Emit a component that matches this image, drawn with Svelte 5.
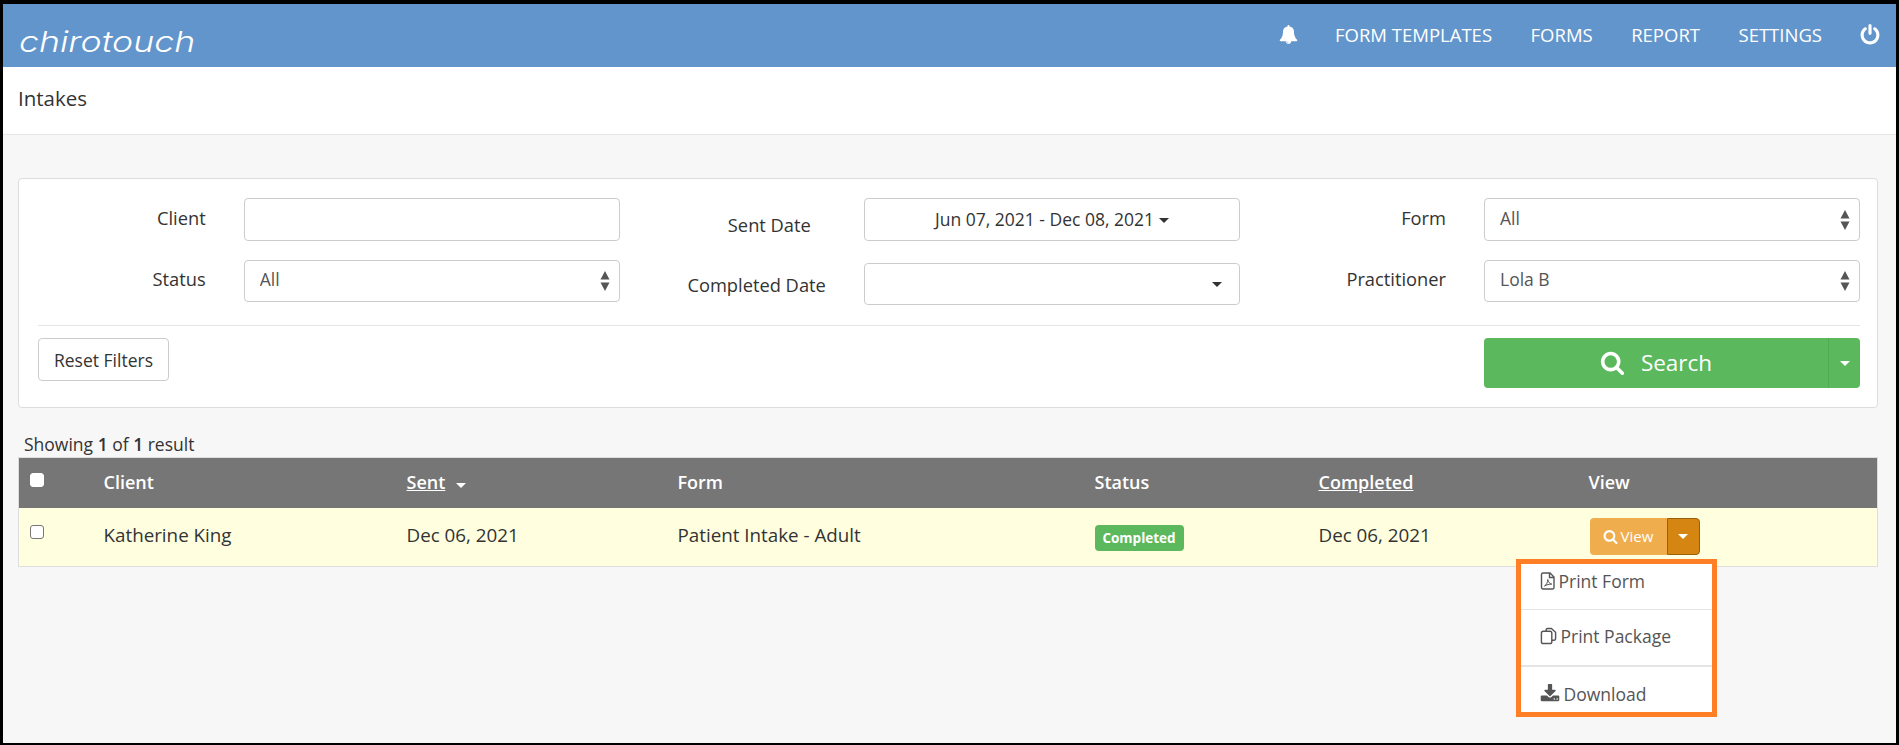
<script>
  let completedFilter = '';
  const searchPath = 'M1216 832q0-185-131.5-316.5t-316.5-131.5-316.5 131.5-131.5 316.5 131.5 316.5 316.5 131.5 316.5-131.5 131.5-316.5zm512 832q0 52-38 90t-90 38q-54 0-90-38l-343-342q-179 124-399 124-143 0-273.5-55.5t-225-150-150-225-55.5-273.5 55.5-273.5 150-225 225-150 273.5-55.5 273.5 55.5 225 150 150 225 55.5 273.5q0 220-124 399l343 343q37 37 37 90z';
  const navItems = ['FORM TEMPLATES', 'FORMS', 'REPORT', 'SETTINGS'];
</script>

<div class="page">
  <header class="topbar">
    <span class="logo">chirotouch</span>
    <nav class="nav">
      <svg class="bell" viewBox="0 0 1792 1792" fill="currentColor"><path d="M912 1696q0-16-16-16-59 0-101.5-42.5t-42.5-101.5q0-16-16-16t-16 16q0 73 51.5 124.5t124.5 51.5q16 0 16-16zm816-288q0 52-38 90t-90 38h-448q0 106-75 181t-181 75-181-75-75-181h-448q-52 0-90-38t-38-90q50-42 91-88t85-119.5 74.5-158.5 50-206 19.5-260q0-152 117-282.5t307-158.5q-8-19-8-39 0-40 28-68t68-28 68 28 28 68q0 20-8 39 190 28 307 158.5t117 282.5q0 139 19.5 260t50 206 74.5 158.5 85 119.5 91 88z"/></svg>
      {#each navItems as item}
        <span class="nav-link">{item}</span>
      {/each}
      <svg class="power" viewBox="0 0 1792 1792" fill="currentColor"><path d="M1664 896q0 156-61 298t-164 245-245 164-298 61-298-61-245-164-164-245-61-298q0-182 80.5-343t226.5-270q43-32 95.5-25t83.5 50q32 42 24.5 94.5t-49.5 84.5q-98 74-151.5 181t-53.5 228q0 104 40.5 198.5t109.5 163.5 163.5 109.5 198.5 40.5 198.5-40.5 163.5-109.5 109.5-163.5 40.5-198.5q0-121-53.5-228t-151.5-181q-42-32-49.5-84.5t24.5-94.5q31-43 84-50t95 25q146 109 226.5 270t80.5 343zm-640-768v640q0 52-38 90t-90 38-90-38-38-90v-640q0-52 38-90t90-38 90 38 38 90z"/></svg>
    </nav>
  </header>

  <div class="subhead">Intakes</div>

  <main class="content">
    <section class="filters">
      <div class="filter-grid">
        <div class="col">
          <div class="field">
            <label for="f-client" class="up">Client</label>
            <input id="f-client" class="control" type="text" />
          </div>
          <div class="field short">
            <label for="f-status" class="up">Status</label>
            <div class="select-wrap">
              <select id="f-status" class="control"><option>All</option></select>
              <svg class="updown" viewBox="0 0 10 22"><path d="M5 1 9.5 9.5H.5zM.5 12.5h9L5 21z"/></svg>
            </div>
          </div>
        </div>

        <div class="col wide-gap">
          <div class="field">
            <span class="label sent">Sent Date</span>
            <button type="button" class="control range">Jun 07, 2021 - Dec 08, 2021 <i class="caret"></i></button>
          </div>
          <div class="field short">
            <span class="label">Completed Date</span>
            <button type="button" class="control range end">{completedFilter}<i class="caret"></i></button>
          </div>
        </div>

        <div class="col">
          <div class="field">
            <label for="f-form" class="up">Form</label>
            <div class="select-wrap">
              <select id="f-form" class="control"><option>All</option></select>
              <svg class="updown" viewBox="0 0 10 22"><path d="M5 1 9.5 9.5H.5zM.5 12.5h9L5 21z"/></svg>
            </div>
          </div>
          <div class="field short">
            <label for="f-prac" class="up">Practitioner</label>
            <div class="select-wrap">
              <select id="f-prac" class="control"><option>Lola B</option></select>
              <svg class="updown" viewBox="0 0 10 22"><path d="M5 1 9.5 9.5H.5zM.5 12.5h9L5 21z"/></svg>
            </div>
          </div>
        </div>
      </div>

      <hr class="rule" />

      <div class="actions">
        <button type="button" class="reset">Reset Filters</button>
        <div class="search-group">
          <button type="button" class="search">
            <svg viewBox="0 0 1792 1792" fill="currentColor"><path d={searchPath} /></svg>
            <span>Search</span>
          </button>
          <button type="button" class="search-toggle" aria-label="More"><i class="caret"></i></button>
        </div>
      </div>
    </section>

    <div class="count">Showing <b>1</b> of <b>1</b> result</div>

    <table class="results">
      <colgroup>
        <col style="width:85px" /><col style="width:303px" /><col style="width:271px" />
        <col style="width:417px" /><col style="width:224px" /><col style="width:270px" /><col />
      </colgroup>
      <thead>
        <tr>
          <th><input type="checkbox" class="check" /></th>
          <th>Client</th>
          <th><u>Sent</u> <i class="caret head-caret"></i></th>
          <th>Form</th>
          <th>Status</th>
          <th><u>Completed</u></th>
          <th>View</th>
          <th></th>
        </tr>
      </thead>
      <tbody>
        <tr>
          <td><input type="checkbox" class="check" /></td>
          <td><div class="cell">Katherine King</div></td>
          <td><div class="cell">Dec 06, 2021</div></td>
          <td><div class="cell">Patient Intake - Adult</div></td>
          <td><span class="badge">Completed</span></td>
          <td><div class="cell">Dec 06, 2021</div></td>
          <td>
            <div class="view-group">
              <button type="button" class="view">
                <svg viewBox="0 0 1792 1792" fill="currentColor"><path d={searchPath} /></svg>
                View
              </button>
              <button type="button" class="view-toggle" aria-label="Options"><i class="caret"></i></button>

              <div class="menu">
                <div class="menu-item first">
                  <svg class="mi" viewBox="0 0 16 18" fill="none" stroke="currentColor" stroke-width="1.4">
                    <path d="M3 1h7l4 4v10.5a1.5 1.5 0 0 1-1.500 1.500H3a1.500 1.500 0 0 1-1.500-1.500v-13A1.500 1.500 0 0 1 3 1zM9.500 1v4.500H14" />
                    <path d="M4.500 14c2-1 3-3.500 3.300-6.500.4 2.500 2 4.300 4 4.600-2.500 0-5 .6-7.300 1.900z" stroke-width="1" />
                  </svg>
                  <span>Print Form</span>
                </div>
                <div class="menu-item middle">
                  <svg class="mi copy" viewBox="0 0 18 18" fill="none" stroke="currentColor" stroke-width="1.500">
                    <path d="M6.500 4V2.500A1.500 1.500 0 0 1 8 1h4l4.500 4v7a1.500 1.500 0 0 1-1.500 1.500h-2.500" />
                    <rect x="1.500" y="4" width="11" height="13" rx="2" />
                  </svg>
                  <span>Print Package</span>
                </div>
                <div class="menu-item last">
                  <svg class="mi dl" viewBox="0 0 1792 1792" fill="currentColor"><path d="M1344 1344q0-26-19-45t-45-19-45 19-19 45 19 45 45 19 45-19 19-45zm256 0q0-26-19-45t-45-19-45 19-19 45 19 45 45 19 45-19 19-45zm128-224v320q0 40-28 68t-68 28h-1472q-40 0-68-28t-28-68v-320q0-40 28-68t68-28h465l135 136q58 56 136 56t136-56l136-136h464q40 0 68 28t28 68zm-325-569q17 41-14 70l-448 448q-18 19-45 19t-45-19l-448-448q-31-29-14-70 17-39 59-39h256v-448q0-26 19-45t45-19h256q26 0 45 19t19 45v448h256q42 0 59 39z"/></svg>
                  <span>Download</span>
                </div>
              </div>
            </div>
          </td>
          <td></td>
        </tr>
      </tbody>
    </table>
  </main>
</div>

<style>
  :global(body) {
    margin: 0;
    font-family: 'Open Sans', 'Noto Sans', sans-serif;
    color: #333;
  }

  .page {
    box-sizing: border-box;
    width: 1899px;
    height: 745px;
    overflow: hidden;
    border: solid #000;
    border-width: 4px 3px 2px 3px;
    background: #f7f7f7;
  }

  .topbar {
    height: 63px;
    background: #6295cb;
    display: flex;
    align-items: center;
    justify-content: space-between;
    color: #fff;
    padding: 0 15px 0 16px;
  }

  .logo {
    font-family: 'Inter', sans-serif;
    font-weight: 350;
    font-style: italic;
    font-size: 29px;
    color: #fff;
    line-height: 1;
    margin-top: 11px;
    transform: scaleX(1.23);
    transform-origin: left center;
  }

  .nav {
    display: flex;
    align-items: center;
    font-size: 18.500px;
    margin-top: -2px;
  }

  .nav-link {
    margin-right: 38.500px;
  }

  .bell {
    width: 19px;
    height: 19px;
    margin-right: 37px;
  }

  .power {
    width: 22px;
    height: 22px;
    margin-left: -1.500px;
  }

  .subhead {
    height: 67px;
    background: #fff;
    border-bottom: 1px solid #e8e8e8;
    padding-left: 15px;
    font-size: 20.500px;
    line-height: 63px;
    color: #333;
  }

  .content {
    padding: 43px 18px 0 15px;
  }

  .filters {
    background: #fff;
    border: 1px solid #ddd;
    border-radius: 4px;
    padding: 19px 17px 19px 19px;
  }

  .filter-grid {
    display: grid;
    grid-template-columns: repeat(3, 1fr);
    column-gap: 38.500px;
  }

  .col {
    display: flex;
    flex-direction: column;
    gap: 19px;
  }

  .col.wide-gap {
    gap: 22px;
  }

  .field {
    display: flex;
    align-items: center;
    height: 43px;
    font-size: 18.300px;
    font-weight: 500;
    color: #333;
  }

  .field.short {
    height: 42px;
  }

  .field label,
  .label {
    flex: 1;
    text-align: right;
    padding-right: 38px;
  }

  .field .up {
    margin-top: -5px;
  }

  .label.sent {
    padding-right: 53px;
    margin-top: 9px;
  }

  .control {
    box-sizing: border-box;
    width: 376px;
    height: 100%;
    background: #fff;
    border: 1px solid #ccc;
    border-radius: 4px;
    font: inherit;
    font-weight: 400;
    font-size: 17.500px;
    color: #555;
    margin: 0;
  }

  .select-wrap {
    position: relative;
    width: 376px;
    height: 100%;
  }

  select.control {
    appearance: none;
    padding: 0 0 4px 15px;
  }

  .updown {
    position: absolute;
    right: 10px;
    top: 50%;
    width: 10px;
    height: 22px;
    margin-top: -11px;
    fill: #555;
    pointer-events: none;
  }

  .range {
    font-size: 17.500px;
    color: #333;
    text-align: center;
    padding: 0 12px 2px;
  }

  .range.end {
    display: flex;
    align-items: center;
    justify-content: flex-end;
    padding-right: 17px;
    padding-bottom: 0;
  }

  .caret {
    display: inline-block;
    width: 0;
    height: 0;
    vertical-align: middle;
    border-top: 5px solid currentColor;
    border-left: 5px solid transparent;
    border-right: 5px solid transparent;
  }

  .rule {
    border: 0;
    border-top: 1px solid #e5e5e5;
    margin: 20px 0 12px;
  }

  .actions {
    display: flex;
    justify-content: space-between;
    align-items: flex-start;
  }

  .reset {
    box-sizing: border-box;
    width: 131px;
    height: 43px;
    background: #fff;
    border: 1px solid #ccc;
    border-radius: 4px;
    font: inherit;
    font-size: 17.500px;
    color: #333;
    padding: 0;
  }

  .search-group {
    display: flex;
    width: 376px;
    height: 50px;
    color: #fff;
  }

  .search {
    flex: 1;
    display: flex;
    align-items: center;
    justify-content: center;
    gap: 16px;
    background: #5cb85c;
    border: 0;
    border-radius: 4px 0 0 4px;
    color: #fff;
    font: inherit;
    font-size: 22.500px;
    padding: 0 0 2px;
  }

  .search svg {
    width: 25px;
    height: 25px;
  }

  .search-toggle {
    width: 32px;
    background: #5cb85c;
    border: 0;
    border-left: 1px solid #54aa54;
    border-radius: 0 4px 4px 0;
    color: #fff;
    padding: 0;
  }

  .count {
    font-size: 17.500px;
    line-height: 20px;
    margin-top: 26px;
    padding: 0 0 3px 6px;
    color: #333;
  }

  .count b {
    font-weight: 600;
  }

  .results {
    box-sizing: border-box;
    width: 1860px;
    table-layout: fixed;
    border-collapse: collapse;
    border: 1px solid #ddd;
    font-size: 18.800px;
  }

  .results th {
    background: #767676;
    color: #fff;
    height: 48px;
    padding: 0 0 2px;
    text-align: left;
    font-weight: 600;
    font-size: 18px;
  }

  .results td {
    background: #ffffe0;
    height: 58px;
    padding: 0;
    font-weight: 500;
    color: #333;
  }

  .cell {
    padding-bottom: 4px;
  }

  .results th:first-child,
  .results td:first-child {
    padding-left: 11px;
  }

  .check {
    width: 14px;
    height: 14px;
    margin: 0;
    display: block;
    appearance: none;
    background: #fff;
    border: 1px solid #767676;
    border-radius: 3px;
    box-sizing: border-box;
  }

  th .check {
    border-color: #fff;
    margin-top: -4px;
  }

  td .check {
    margin-top: -10px;
  }

  .head-caret {
    margin-left: 6px;
    margin-top: 3px;
  }

  .badge {
    display: inline-block;
    width: 89px;
    height: 26px;
    line-height: 26px;
    text-align: center;
    background: #5cb85c;
    color: #fff;
    border-radius: 4px;
    font-size: 13.500px;
    font-weight: 700;
    vertical-align: middle;
  }

  .view-group {
    position: relative;
    display: flex;
    width: 110px;
    height: 37px;
    margin-left: 1px;
    margin-top: -2px;
  }

  .view {
    box-sizing: border-box;
    width: 77px;
    display: flex;
    align-items: center;
    justify-content: center;
    gap: 3px;
    background: #f0ad4e;
    border: 0;
    border-radius: 4px 0 0 4px;
    color: #fff;
    font: inherit;
    font-size: 15px;
    font-weight: 400;
    padding: 0;
  }

  .view svg {
    width: 15px;
    height: 15px;
  }

  .view-toggle {
    box-sizing: border-box;
    width: 33px;
    background: #d58512;
    border: 1px solid #985f0d;
    border-radius: 0 4px 4px 0;
    color: #fff;
    padding: 0;
  }

  .menu {
    position: absolute;
    left: -74px;
    top: 41px;
    box-sizing: border-box;
    width: 201px;
    height: 158px;
    background: #fff;
    border: 5px solid #ff7f27;
    font-size: 17.500px;
    font-weight: 400;
    color: #555;
    z-index: 2;
  }

  .menu-item {
    box-sizing: border-box;
    display: flex;
    align-items: center;
    gap: 4px;
    padding-left: 19px;
  }

  .menu-item.first {
    height: 46px;
    gap: 3px;
    padding-bottom: 10px;
    border-bottom: 1px solid #e5e5e5;
  }

  .menu-item.middle {
    height: 57px;
    padding-bottom: 2px;
    border-bottom: 2px solid #e5e5e5;
  }

  .menu-item.last {
    height: 45px;
    padding-top: 9px;
  }

  .mi {
    width: 16px;
    height: 18px;
    flex: none;
  }

  .mi.copy {
    width: 17px;
  }

  .mi.dl {
    width: 20px;
    height: 20px;
  }
</style>
